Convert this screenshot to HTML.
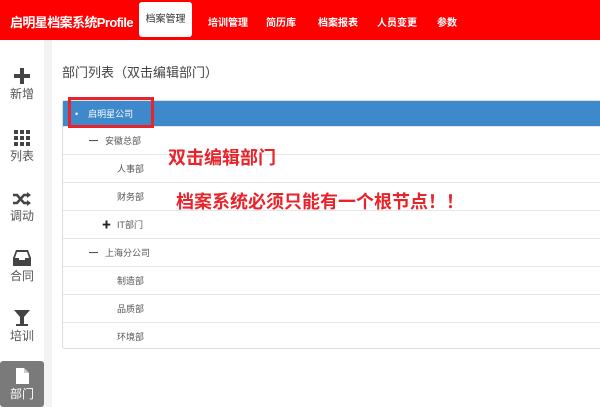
<!DOCTYPE html><html><head><meta charset="utf-8"><style>
*{margin:0;padding:0;box-sizing:border-box}
body{width:600px;height:407px;overflow:hidden;background:#fff;font-family:"Liberation Sans","Noto Sans CJK SC",sans-serif;position:relative}
.hd{position:absolute;left:0;top:0;width:600px;height:40px;background:#f00;color:#fff}
.hd .logo{position:absolute;left:10px;top:12px;font-size:13px;font-weight:bold;letter-spacing:-0.6px;white-space:nowrap}
.hd .t{position:absolute;top:14px;font-size:10px;font-weight:bold}
.hd .act{position:absolute;left:139px;top:2px;width:53px;height:35px;background:#fff;border-radius:3px;color:#333;font-size:10px;text-align:center;padding-top:12px;line-height:11px}
.sb{position:absolute;left:0;top:40px;height:367px;background:#fff;border-right:8px solid #f3f3f3;width:52px}
.it{position:absolute;left:0;width:44px;text-align:center;color:#555;font-size:12px}
.it svg{display:block;margin:0 auto 1px}
.title{position:absolute;left:62px;top:62px;font-size:13px;color:#444}
.list{position:absolute;left:62px;top:100px;width:540px;height:249px;border:1px solid #ddd;border-radius:3px;background:#fff}
.row{position:absolute;left:0;width:540px;height:28px;border-bottom:1px solid #e6e6e6;font-size:9px;color:#555;line-height:28px}
.blue{background:#3e89cc;color:#fff;top:0;height:26px;line-height:26px}
.red{position:absolute;color:#e8232a;font-weight:bold;font-size:18px;line-height:22px;white-space:nowrap}
</style></head><body>
<div class="hd"><div class="logo">启明星档案系统Profile</div>
<div class="act">档案管理</div>
<div class="t" style="left:208px">培训管理</div>
<div class="t" style="left:266px">简历库</div>
<div class="t" style="left:318px">档案报表</div>
<div class="t" style="left:377px">人员变更</div>
<div class="t" style="left:437px">参数</div></div>
<div class="sb"></div>
<div class="it" style="top:68px"><svg width="16" height="16" viewBox="0 0 16 16"><path d="M6 0h4v6h6v4h-6v6h-4v-6h-6v-4h6z" fill="#444"/></svg>新增</div>
<div class="it" style="top:130px"><svg width="16" height="16" viewBox="0 0 16 16" fill="#444"><rect x="0" y="0" width="4" height="4"/><rect x="6" y="0" width="4" height="4"/><rect x="12" y="0" width="4" height="4"/><rect x="0" y="6" width="4" height="4"/><rect x="6" y="6" width="4" height="4"/><rect x="12" y="6" width="4" height="4"/><rect x="0" y="12" width="4" height="4"/><rect x="6" y="12" width="4" height="4"/><rect x="12" y="12" width="4" height="4"/></svg>列表</div>
<div class="it" style="top:192px"><svg width="18" height="14" viewBox="0 0 18 14" fill="none" stroke="#444" stroke-width="2.5"><path d="M0 3h4l7 8h4M0 11h4l7-8h4"/><path d="M14 0l4 3-4 3zM14 8l4 3-4 3z" fill="#444" stroke="none"/></svg>调动</div>
<div class="it" style="top:250px"><svg width="18" height="16" viewBox="0 0 18 16"><path d="M3 0h12l3 8v8h-18v-8z" fill="#444"/><path d="M4 2h10l2 6h-4v2h-6v-2h-4z" fill="#fff"/></svg>合同</div>
<div class="it" style="top:310px"><svg width="16" height="16" viewBox="0 0 16 16" fill="#444"><path d="M0 0h16l-6 7v7h4v2h-12v-2h4v-7z"/></svg>培训</div>
<div class="it" style="top:361px;height:46px;background:#7a7a7a;color:#fff;border-radius:3px;padding-top:7px"><svg width="13" height="16" viewBox="0 0 13 16"><path d="M0 0h8l5 5v11h-13z" fill="#fff"/><path d="M8 0v5h5" fill="#ccc"/></svg>部门</div>
<div class="title">部门列表（双击编辑部门）</div>
<div class="list">
<div class="row blue"><span style="margin-left:12px">•</span><span style="margin-left:10px">启明星公司</span></div>
<div class="row" style="top:26px"><b style="margin-left:26px">━</b><span style="margin-left:7px">安徽总部</span></div>
<div class="row" style="top:54px"><span style="margin-left:54px">人事部</span></div>
<div class="row" style="top:82px"><span style="margin-left:54px">财务部</span></div>
<div class="row" style="top:110px"><b style="margin-left:39px;color:#222">✚</b><span style="margin-left:6px">IT部门</span></div>
<div class="row" style="top:138px"><b style="margin-left:26px">━</b><span style="margin-left:7px">上海分公司</span></div>
<div class="row" style="top:166px"><span style="margin-left:54px">制造部</span></div>
<div class="row" style="top:194px"><span style="margin-left:54px">品质部</span></div>
<div class="row" style="top:222px;border-bottom:none"><span style="margin-left:54px">环境部</span></div>
</div>
<div style="position:absolute;left:68px;top:97px;width:86px;height:31px;border:3px solid #e8232a"></div>
<div class="red" style="left:168px;top:147px">双击编辑部门</div>
<div class="red" style="left:176px;top:191px">档案系统必须只能有一个根节点！！</div>
</body></html>
